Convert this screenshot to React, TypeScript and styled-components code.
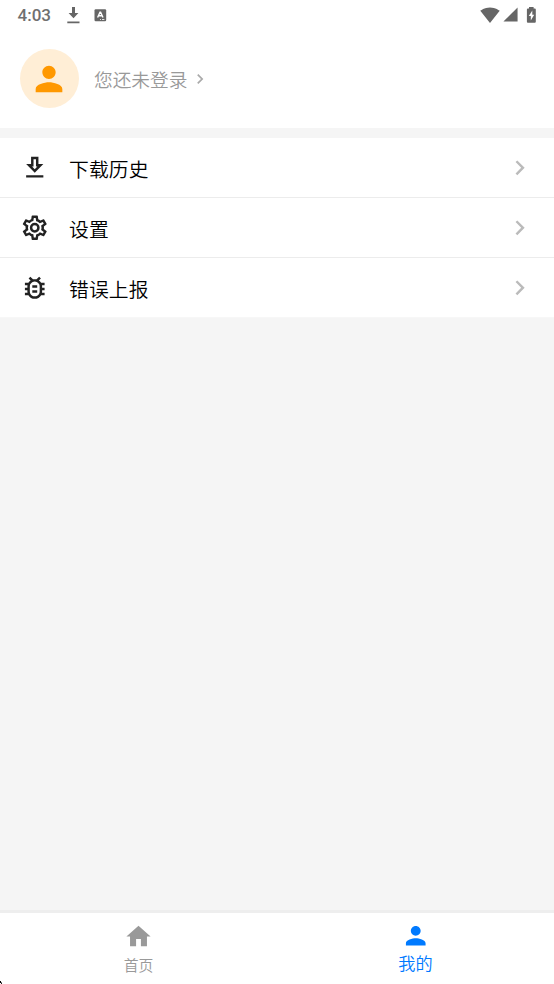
import React from "react";
import styled, { createGlobalStyle } from "styled-components";
import {
  MdPerson,
  MdHome,
  MdOutlineBugReport,
  MdChevronRight,
  MdSignalWifi4Bar,
  MdSignalCellular4Bar,
} from "react-icons/md";

const GlobalStyle = createGlobalStyle`
  * { box-sizing: border-box; }
  body { margin: 0; background: #f5f5f5; font-family: "Noto Sans CJK SC", sans-serif; font-weight: 350; }
  svg { display: block; flex: none; }
`;

const Screen = styled.div`
  position: relative;
  display: flex;
  flex-direction: column;
  height: 984px;
  overflow: hidden;
  background: #f5f5f5;
`;

const StatusBar = styled.header`
  display: flex;
  justify-content: space-between;
  height: 29px;
  padding: 0 17px;
  background: #fff;
  color: #666;
`;

const StatusGroup = styled.div`
  display: flex;
  align-items: center;
  height: 29px;
`;

const Clock = styled.span`
  width: 49px;
  font: 500 17px/29px Roboto, sans-serif;
  padding: 2px 0 0 0.5px;
  color: #707070;
`;

const Notice = styled.span<{ $gap: number }>`
  margin-right: ${(p) => p.$gap}px;
`;

const Profile = styled.section`
  display: flex;
  align-items: center;
  height: 99px;
  padding: 0 20px;
  background: #fff;
`;

const Avatar = styled.div`
  display: flex;
  align-items: center;
  width: 59px;
  height: 59px;
  padding-left: 9px;
  margin-right: 15px;
  border-radius: 50%;
  background: #ffeed6;
  color: #ff9800;
`;

const LoginText = styled.span`
  margin: 0 3px 0 0;
  font-size: 18.7px;
  line-height: 28px;
  color: #999;
`;

const Menu = styled.nav`
  margin-top: 10px;
  background: #fff;
`;

const MenuRow = styled.div`
  display: flex;
  align-items: center;
  height: 60px;
  padding: 0 20px;
  border-bottom: 1px solid #ececec;
  color: #222;
  &:last-child { border-bottom-color: #f7f7f7; }
`;

const IconSlot = styled.span`
  display: flex;
  justify-content: center;
  width: 29px;
`;

const RowLabel = styled.span`
  flex: 1;
  margin: 3px 0 0 20px;
  font-size: 19.8px;
  letter-spacing: 0.15px;
  line-height: 30px;
  color: #000;
`;

const Arrow = styled.span<{ $color: string }>`
  color: ${(p) => p.$color};
`;

const TabBar = styled.nav`
  display: grid;
  grid-template-columns: 1fr 1fr;
  height: 74px;
  margin-top: auto;
  border-top: 3px solid #eee;
  background: #fff;
`;

const Tab = styled.div<{ $active?: boolean }>`
  display: flex;
  flex-direction: column;
  align-items: center;
  padding-top: ${(p) => (p.$active ? 8 : 9)}px;
  color: ${(p) => (p.$active ? "#007aff" : "#999")};
`;

const TabLabel = styled.span<{ $active?: boolean }>`
  margin-top: ${(p) => (p.$active ? 0 : 2)}px;
  font-size: ${(p) => (p.$active ? 17.2 : 14.8)}px;
  line-height: 24px;
`;

const Corner = styled.svg`
  position: absolute;
  left: 0;
  bottom: 0;
`;

const DownloadOutline = ({ size }: { size: number }) => (
  <svg width={size} height={size} viewBox="0 0 24 24" fill="currentColor">
    <path d="M19 9h-4V3H9v6H5l7 7 7-7zm-8 2V5h2v6h1.17L12 13.17 9.83 11H11zm-6 7h14v2H5z" />
  </svg>
);

const CogOutline = ({ size }: { size: number }) => (
  <svg width={size} height={size} viewBox="0 0 24 24" fill="currentColor">
    <path d="M12,8A4,4 0 0,1 16,12A4,4 0 0,1 12,16A4,4 0 0,1 8,12A4,4 0 0,1 12,8M12,10A2,2 0 0,0 10,12A2,2 0 0,0 12,14A2,2 0 0,0 14,12A2,2 0 0,0 12,10M10,22C9.75,22 9.54,21.82 9.5,21.58L9.13,18.93C8.5,18.68 7.96,18.34 7.44,17.94L4.95,18.95C4.73,19.03 4.46,18.95 4.34,18.73L2.34,15.27C2.21,15.05 2.27,14.78 2.46,14.63L4.57,12.97L4.5,12L4.57,11L2.46,9.37C2.27,9.22 2.21,8.95 2.34,8.73L4.34,5.27C4.46,5.05 4.73,4.96 4.95,5.05L7.44,6.05C7.96,5.66 8.5,5.32 9.13,5.07L9.5,2.42C9.54,2.18 9.75,2 10,2H14C14.25,2 14.46,2.18 14.5,2.42L14.87,5.07C15.5,5.32 16.04,5.66 16.56,6.05L19.05,5.05C19.27,4.96 19.54,5.05 19.66,5.27L21.66,8.73C21.79,8.95 21.73,9.22 21.54,9.37L19.43,11L19.5,12L19.43,13L21.54,14.63C21.73,14.78 21.79,15.05 21.66,15.27L19.66,18.73C19.54,18.95 19.27,19.04 19.05,18.95L16.56,17.95C16.04,18.34 15.5,18.68 14.87,18.93L14.5,21.58C14.46,21.82 14.25,22 14,22H10M11.25,4L10.88,6.61C9.68,6.86 8.62,7.5 7.85,8.39L5.44,7.35L4.69,8.65L6.8,10.2C6.4,11.37 6.4,12.64 6.8,13.8L4.68,15.36L5.43,16.66L7.86,15.62C8.63,16.5 9.68,17.14 10.87,17.38L11.24,20H12.76L13.13,17.39C14.32,17.14 15.37,16.5 16.14,15.62L18.57,16.66L19.32,15.36L17.2,13.81C17.6,12.64 17.6,11.37 17.2,10.2L19.31,8.65L18.56,7.35L16.15,8.39C15.38,7.5 14.32,6.86 13.12,6.62L12.75,4H11.25Z" />
  </svg>
);

const rows = [
  { label: "下载历史", Icon: DownloadOutline },
  { label: "设置", Icon: CogOutline },
  { label: "错误上报", Icon: MdOutlineBugReport },
];

export default function App() {
  return (
    <>
      <GlobalStyle />
      <Screen>
        <StatusBar>
          <StatusGroup>
            <Clock>4:03</Clock>
            <Notice $gap={13}>
              <svg width="14" height="18" viewBox="0 0 14 18" fill="currentColor">
                <path d="M6 1h3v6h3.4L7.5 12.2 2.6 7H6zM1.3 15.4h12.2v1.9H1.3z" />
              </svg>
            </Notice>
            <Notice $gap={0}>
              <svg width="14" height="14" viewBox="0 0 14 14">
                <rect x="1.5" y="1.2" width="11.7" height="12" rx="1.2" fill="#666" />
                <path d="M4.6 9.5 7 4.2h.6L10 9.5M5.6 7.8H9" fill="none" stroke="#fff" strokeWidth="1.4" />
                <path d="M7 11.5h1M9 11.5h2.4" stroke="#fff" strokeWidth="0.8" />
              </svg>
            </Notice>
          </StatusGroup>
          <StatusGroup>
            <Notice $gap={1.5}><MdSignalWifi4Bar size={20} /></Notice>
            <Notice $gap={7.5}><MdSignalCellular4Bar size={17} /></Notice>
            <svg width="11" height="18" viewBox="0 0 11 18">
              <path d="M3 1h4.6v1.6h1.2q1 0 1 1v12.2q0 1-1 1H1.9q-1 0-1-1V3.6q0-1 1-1H3z" fill="#666" />
              <path d="M6.3 4.6 2.8 10h2v4.6L8.2 8.8H6.3z" fill="#fff" />
            </svg>
          </StatusGroup>
        </StatusBar>
        <Profile>
          <Avatar><MdPerson size={40} /></Avatar>
          <LoginText>您还未登录</LoginText>
          <Arrow $color="#aaa"><MdChevronRight size={20} /></Arrow>
        </Profile>
        <Menu>
          {rows.map(({ label, Icon }) => (
            <MenuRow key={label}>
              <IconSlot><Icon size={29.5} /></IconSlot>
              <RowLabel>{label}</RowLabel>
              <Arrow $color="#bbb"><MdChevronRight size={29.5} /></Arrow>
            </MenuRow>
          ))}
        </Menu>
        <TabBar>
          <Tab><MdHome size={29} /><TabLabel>首页</TabLabel></Tab>
          <Tab $active><MdPerson size={29.5} /><TabLabel $active>我的</TabLabel></Tab>
        </TabBar>
        <Corner width="3" height="4" viewBox="0 0 3 4">
          <path d="M0 1h1v2H0z" fill="#000" />
          <path d="M1 2h1v1H1z" fill="#777" />
          <path d="M1 3h1v1H1z" fill="#222" />
        </Corner>
      </Screen>
    </>
  );
}
